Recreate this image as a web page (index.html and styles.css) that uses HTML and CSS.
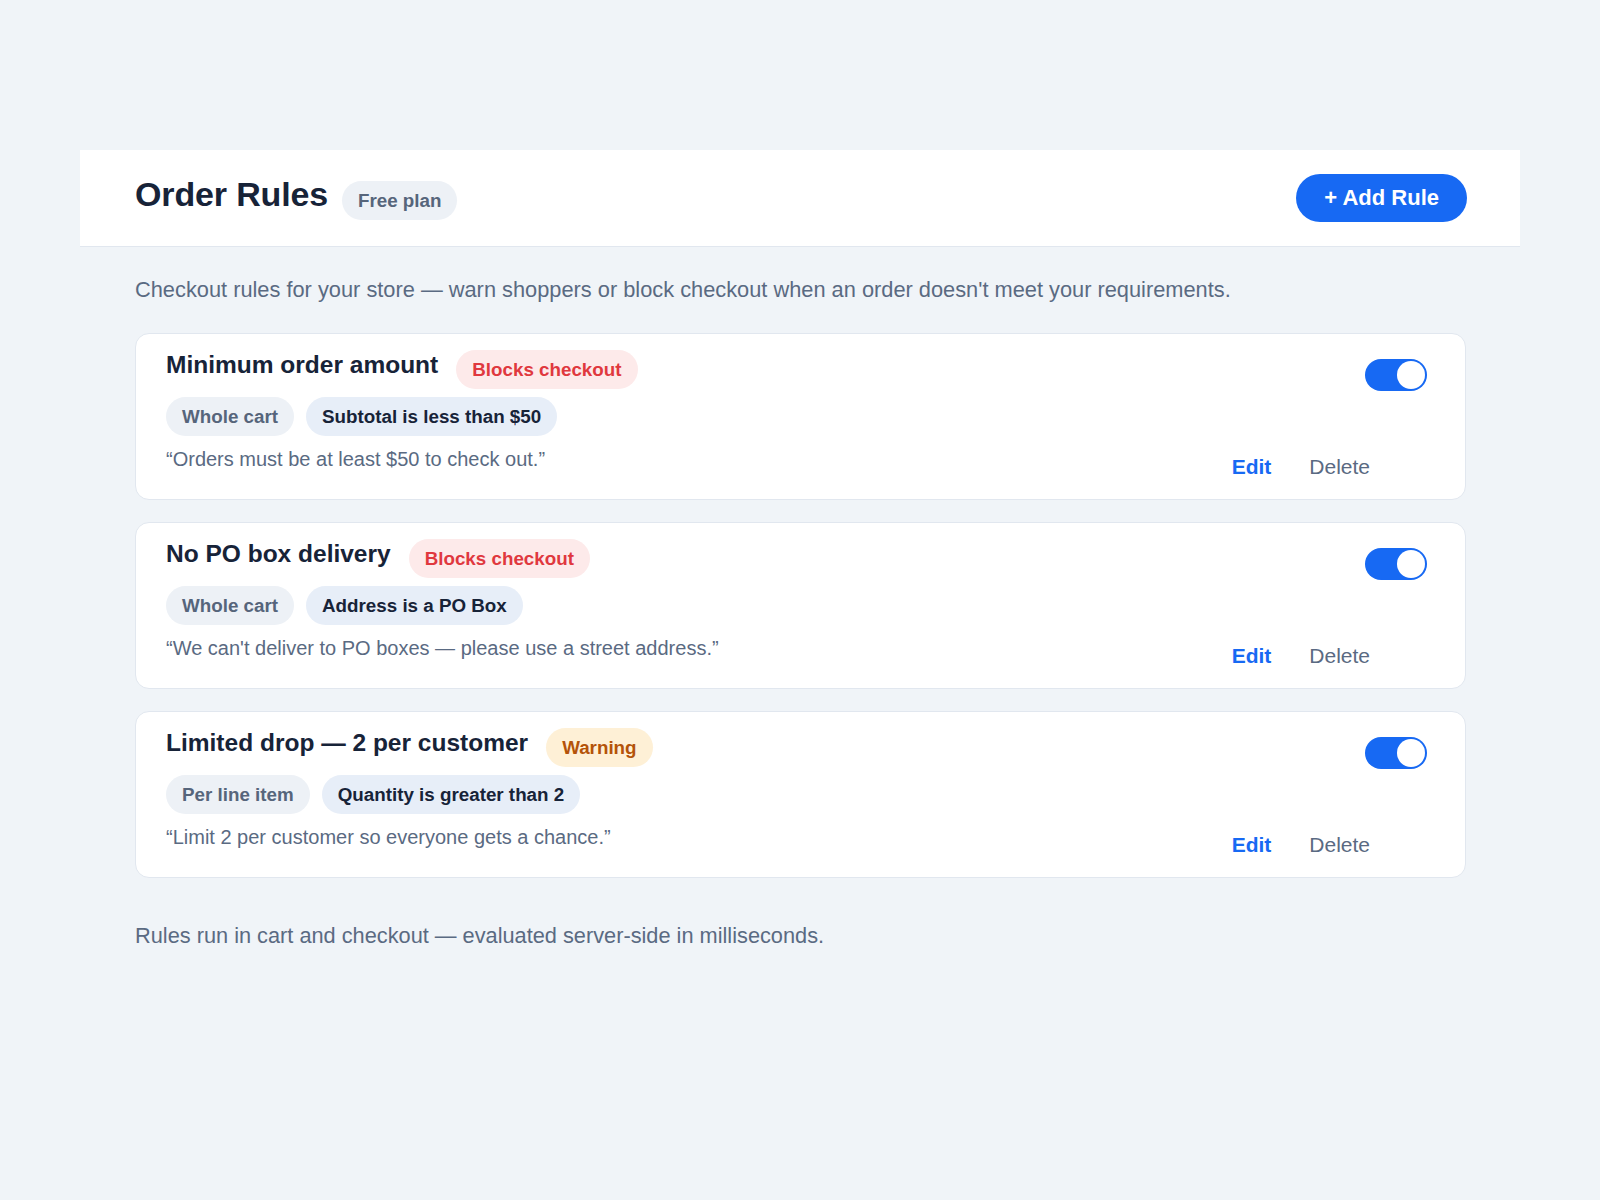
FILE: index.html
```html
<!DOCTYPE html>
<html lang="en">
  <head>
    <meta charset="UTF-8" />
    <meta name="viewport" content="width=device-width, initial-scale=1.0" />
    <title>Order Rules</title>
    <link rel="stylesheet" href="styles.css">
  </head>
  <body>
    <div class="page">
      <header class="page-header">
        <div class="title-group">
          <h1>Order Rules</h1>
          <span class="pill pill-muted">Free plan</span>
        </div>
        <button class="btn btn-primary">+ Add Rule</button>
      </header>

      <main class="page-body">
        <p class="intro">
          Checkout rules for your store — warn shoppers or block checkout when an order doesn't meet your requirements.
        </p>

        <ul class="rule-list">
          <li class="rule-card">
            <div class="rule-main">
              <div class="rule-head">
                <h3>Minimum order amount</h3>
                <span class="pill pill-danger">Blocks checkout</span>
              </div>
              <div class="rule-tags">
                <span class="pill pill-muted">Whole cart</span>
                <span class="pill pill-condition">Subtotal is less than $50</span>
              </div>
              <p class="rule-message">“Orders must be at least $50 to check out.”</p>
            </div>
            <div class="rule-side">
              <span class="toggle on"><span class="knob"></span></span>
              <div class="rule-actions">
                <button class="link link-edit">Edit</button>
                <button class="link link-delete">Delete</button>
              </div>
            </div>
          </li>

          <li class="rule-card">
            <div class="rule-main">
              <div class="rule-head">
                <h3>No PO box delivery</h3>
                <span class="pill pill-danger">Blocks checkout</span>
              </div>
              <div class="rule-tags">
                <span class="pill pill-muted">Whole cart</span>
                <span class="pill pill-condition">Address is a PO Box</span>
              </div>
              <p class="rule-message">“We can't deliver to PO boxes — please use a street address.”</p>
            </div>
            <div class="rule-side">
              <span class="toggle on"><span class="knob"></span></span>
              <div class="rule-actions">
                <button class="link link-edit">Edit</button>
                <button class="link link-delete">Delete</button>
              </div>
            </div>
          </li>

          <li class="rule-card">
            <div class="rule-main">
              <div class="rule-head">
                <h3>Limited drop — 2 per customer</h3>
                <span class="pill pill-warning">Warning</span>
              </div>
              <div class="rule-tags">
                <span class="pill pill-muted">Per line item</span>
                <span class="pill pill-condition">Quantity is greater than 2</span>
              </div>
              <p class="rule-message">“Limit 2 per customer so everyone gets a chance.”</p>
            </div>
            <div class="rule-side">
              <span class="toggle on"><span class="knob"></span></span>
              <div class="rule-actions">
                <button class="link link-edit">Edit</button>
                <button class="link link-delete">Delete</button>
              </div>
            </div>
          </li>
        </ul>

        <p class="footnote">Rules run in cart and checkout — evaluated server-side in milliseconds.</p>
      </main>
    </div>
  </body>
</html>
```

FILE: styles.css
```css
* {
  font-family: "Liberation Sans", Arial, sans-serif;
  margin: 0;
  box-sizing: border-box;
}
body {
  background-color: #f0f4f8;
  color: #172338;
}
.page {
  max-width: 1440px;
  margin: 150px auto 0;
}

.page-header {
  display: flex;
  align-items: center;
  justify-content: space-between;
  background-color: #ffffff;
  border-bottom: 1px solid #e1e7ef;
  padding: 24px 53px 24px 55px;
}
.title-group {
  display: flex;
  align-items: center;
  gap: 14px;
}
.title-group h1 {
  font-size: 34px;
  letter-spacing: -0.15px;
  color: #172338;
  line-height: 40px;
  margin-bottom: 8px;
}
.title-group .pill {
  margin-top: 4px;
}

.btn {
  border: none;
  cursor: pointer;
}
.btn.btn-primary {
  background-color: #1769f3;
  color: #ffffff;
  font-size: 22px;
  font-weight: 700;
  line-height: 26px;
  padding: 11px 28px;
  border-radius: 24px;
}

.pill {
  display: inline-block;
  font-size: 18.8px;
  font-weight: 700;
  line-height: 21px;
  padding: 9px 16px;
  border-radius: 20px;
  white-space: nowrap;
}
.pill-muted {
  background-color: #edf1f6;
  color: #56657b;
}
.pill-condition {
  background-color: #e7eef8;
  color: #172338;
}
.pill-danger {
  background-color: #fdeaea;
  color: #e0383e;
}
.pill-warning {
  background-color: #fef0d6;
  color: #b45309;
}

.page-body {
  padding: 28px 54px 0 55px;
}
.intro {
  font-size: 21.8px;
  line-height: 30px;
  color: #5a6a82;
  margin-bottom: 28px;
}

.rule-list {
  list-style-type: none;
  padding: 0;
  display: flex;
  flex-direction: column;
  gap: 22px;
}
.rule-card {
  display: flex;
  background-color: #ffffff;
  border: 1px solid #e1e7ef;
  border-radius: 14px;
  padding: 16px 38px 16px 30px;
}
.rule-main {
  flex: 1;
}
.rule-head {
  display: flex;
  align-items: center;
  gap: 18px;
}
.rule-head h3 {
  font-size: 24.5px;
  line-height: 28px;
  color: #172338;
  margin-bottom: 9px;
}
.rule-tags {
  display: flex;
  gap: 12px;
  margin-top: 8px;
}
.rule-message {
  font-size: 20px;
  line-height: 28px;
  color: #5a6a82;
  margin-top: 9px;
}

.rule-side {
  display: flex;
  flex-direction: column;
  align-items: flex-end;
}
.toggle {
  display: flex;
  justify-content: flex-end;
  align-items: center;
  width: 62px;
  height: 32px;
  padding: 2px;
  border-radius: 16px;
  background-color: #d5dce6;
  margin-top: 9px;
}
.toggle.on {
  background-color: #1769f3;
}
.toggle .knob {
  width: 28px;
  height: 28px;
  border-radius: 50%;
  background-color: #ffffff;
}
.rule-actions {
  display: flex;
  margin-top: 60px;
  margin-right: 38px;
}
.link {
  background: none;
  border: none;
  cursor: pointer;
  font-size: 21px;
  line-height: 24px;
  padding: 4px 19px;
}
.link-edit {
  color: #1769f3;
  font-weight: 700;
}
.link-delete {
  color: #5a6a82;
}

.footnote {
  font-size: 21.75px;
  line-height: 30px;
  color: #5a6a82;
  margin-top: 43px;
}
```
